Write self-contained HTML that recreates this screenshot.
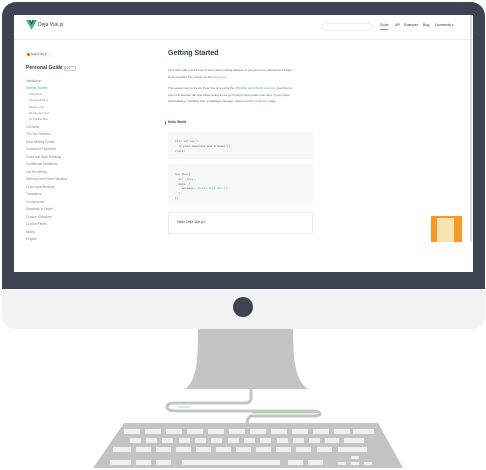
<!DOCTYPE html>
<html><head><meta charset="utf-8"><style>
*{margin:0;padding:0;box-sizing:border-box}
body{width:486px;height:470px;background:#fff;position:relative;overflow:hidden;font-family:"Liberation Sans",sans-serif;color:#34495e}
.abs{position:absolute}
.frame{left:2px;top:2px;width:483px;height:288px;background:#3d4352;border-radius:14px 14px 0 0}
.bez{left:2px;top:289px;width:483px;height:40px;background:#f3f3f3;border-radius:0 0 12px 12px}
.screen{left:14px;top:15px;width:459px;height:257px;background:#fff}
.t{position:absolute;white-space:nowrap;line-height:1}
.sb{font-size:3.2px;color:#7f8c8d}
.p{font-size:3px;color:#666}
.code{background:#f8f8f8;position:absolute}
.m{font-family:"Liberation Mono",monospace;font-size:2.8px;position:absolute;white-space:nowrap}
.key{position:absolute;background:#f0f0f0;height:5px}
</style></head><body>
<div class="abs frame"></div>
<div class="abs bez"></div>
<div class="abs" style="left:233px;top:297px;width:20px;height:20px;border-radius:50%;background:#3d4352"></div>
<div class="abs screen">
  <div class="abs" style="left:0;top:24px;width:459px;height:1px;background:#eee"></div>
  <div class="abs" style="left:456px;top:0;width:2px;height:227px;background:#ddd"></div>
  <svg class="abs" style="left:12px;top:5px" width="11" height="10" viewBox="0 0 11 10"><path d="M0 0H4L5.5 3L7 0H11L5.5 10Z" fill="#42b983"/><path d="M3 0H4.6L5.5 2L6.4 0H8L5.5 5Z" fill="#35495e"/></svg>
  <div class="t" style="left:24px;top:8px;font-size:5px;color:#2c3e50">Deja Vue.js</div>
  <div class="abs" style="left:307px;top:8px;width:52px;height:8px;border:1px solid #eee;border-radius:5px"></div>
  <div class="t" style="left:366px;top:9px;font-size:3.2px;color:#2c3e50">Guide</div>
  <div class="abs" style="left:366px;top:14px;width:8px;height:1px;background:#42b983"></div>
  <div class="t" style="left:381px;top:9px;font-size:3.2px;color:#2c3e50">API</div>
  <div class="t" style="left:390px;top:9px;font-size:3.2px;color:#2c3e50">Examples</div>
  <div class="t" style="left:409px;top:9px;font-size:3.2px;color:#2c3e50">Blog</div>
  <div class="t" style="left:421px;top:9px;font-size:3.2px;color:#2c3e50">Community ▾</div>
  <div class="abs" style="left:12px;top:37px;width:26px;height:5px;background:#f4f4f4;border-radius:1px"></div>
  <div class="abs" style="left:13px;top:38px;width:3px;height:3px;border-radius:50%;background:#e96900"></div>
  <div class="t" style="left:17px;top:38.5px;font-size:2.4px;color:#555">Support Vue.js</div>
  <div class="t" style="left:12px;top:51px;font-size:5px;font-weight:bold;color:#2c3e50">Personal Guide</div>
  <div class="abs" style="left:50px;top:51px;width:12px;height:5px;border:1px solid #ccc;font-size:2.5px;line-height:3px">2.x ▾</div>
  <div class="t sb" style="left:12px;top:65px">Installation</div>
  <div class="t sb" style="left:12px;top:72px;color:#42b983">Getting Started</div>
  <div class="t" style="left:15px;top:79px;font-size:2.5px;color:#42b983">Hello World</div>
  <div class="t" style="left:15px;top:85px;font-size:2.5px;color:#888">Two-way Binding</div>
  <div class="t" style="left:15px;top:92px;font-size:2.5px;color:#888">Render a List</div>
  <div class="t" style="left:15px;top:98px;font-size:2.5px;color:#888">Handle User Input</div>
  <div class="t" style="left:15px;top:104px;font-size:2.5px;color:#888">All Together Now</div>
  <div class="t sb" style="left:12px;top:111px">Overview</div>
  <div class="t sb" style="left:12px;top:118px">The Vue Instance</div>
  <div class="t sb" style="left:12px;top:126px">Data Binding Syntax</div>
  <div class="t sb" style="left:12px;top:133px">Computed Properties</div>
  <div class="t sb" style="left:12px;top:141px">Class and Style Bindings</div>
  <div class="t sb" style="left:12px;top:148px">Conditional Rendering</div>
  <div class="t sb" style="left:12px;top:156px">List Rendering</div>
  <div class="t sb" style="left:12px;top:163px">Methods and Event Handling</div>
  <div class="t sb" style="left:12px;top:171px">Form Input Bindings</div>
  <div class="t sb" style="left:12px;top:178px">Transitions</div>
  <div class="t sb" style="left:12px;top:186px">Components</div>
  <div class="t sb" style="left:12px;top:193px">Reactivity in Depth</div>
  <div class="t sb" style="left:12px;top:201px">Custom Directives</div>
  <div class="t sb" style="left:12px;top:208px">Custom Filters</div>
  <div class="t sb" style="left:12px;top:216px">Mixins</div>
  <div class="t sb" style="left:12px;top:223px">Plugins</div>
  <div class="t" style="left:154px;top:35px;font-size:7px;font-weight:bold;color:#2c3e50">Getting Started</div>
  <div class="t p" style="left:154px;top:54px">Let's start with a quick tour of Vue's data binding features. If you are more interested in a high-</div>
  <div class="t p" style="left:154px;top:61px">level overview first, check out this <span style="color:#42b983">blog post</span>.</div>
  <div class="t p" style="left:154px;top:72px">The easiest way to try out Deja Vue.js is using the <span style="color:#42b983">JSFiddle Hello World example</span>. Feel free to</div>
  <div class="t p" style="left:154px;top:79px">open it in another tab and follow along as we go through some basic examples. If you prefer</div>
  <div class="t p" style="left:154px;top:85px">downloading / installing from a package manager, check out the <span style="color:#42b983">Installation</span> page.</div>
  <div class="abs" style="left:151px;top:106px;width:1px;height:4px;background:#42b983"></div>
  <div class="t" style="left:154px;top:106px;font-size:3.3px;font-weight:bold;color:#2c3e50">Hello World</div>
  <div class="code" style="left:154px;top:117px;width:145px;height:27px"></div>
  <div class="m" style="left:161px;top:125px;color:#2973b7">&lt;div id=<span style="color:#42b983">"app"</span>&gt;</div>
  <div class="m" style="left:161px;top:130px;color:#555">&nbsp;&nbsp;{{ past memories and traumas }}</div>
  <div class="m" style="left:161px;top:135px;color:#2973b7">&lt;/div&gt;</div>
  <div class="code" style="left:154px;top:149px;width:145px;height:42px"></div>
  <div class="m" style="left:161px;top:158px;color:#555"><span style="color:#e96900">new</span> Vue({</div>
  <div class="m" style="left:161px;top:163px;color:#555">&nbsp;&nbsp;el: <span style="color:#42b983">'#app'</span>,</div>
  <div class="m" style="left:161px;top:168px;color:#555">&nbsp;&nbsp;data: {</div>
  <div class="m" style="left:161px;top:172px;color:#555">&nbsp;&nbsp;&nbsp;&nbsp;message: <span style="color:#42b983">'Hello Deja Vue.js!'</span></div>
  <div class="m" style="left:161px;top:177px;color:#555">&nbsp;&nbsp;}</div>
  <div class="m" style="left:161px;top:182px;color:#555">})</div>
  <div class="abs" style="left:154px;top:197px;width:145px;height:22px;border:1px solid #eee"></div>
  <div class="t" style="left:163px;top:206px;font-size:3.5px;color:#2c3e50">Hello Deja Vue.js!</div>
  <div class="abs" style="left:417px;top:201px;width:31px;height:26px;background:#f59a2a"></div>
  <div class="abs" style="left:423px;top:203px;width:17px;height:24px;background:#f7e2b0"></div>
</div>
<svg class="abs" style="left:0;top:328px" width="486" height="142" viewBox="0 328 486 142">
  <path d="M198 329H293C293 360 295 380 308 389H185C197 380 198 360 198 329Z" fill="#c4c4c4"/>
  <path d="M251 389V398Q251 403 245 403H175Q167 403 167 407Q167 411 178 411H310Q320 411 320 414Q320 416 312 416H252Q248 416 247 423" fill="none" stroke="#c4c4c4" stroke-width="3"/>
  <path d="M178 407H190M252 413H315" stroke="#9be39b" stroke-width="1"/>
  <path d="M124 423H378L403 468H93Z" fill="#c4c4c4"/>
</svg>
<div class="key" style="left:124px;top:429px;width:16px"></div><div class="key" style="left:145px;top:429px;width:16px"></div><div class="key" style="left:166px;top:429px;width:16px"></div><div class="key" style="left:187px;top:429px;width:16px"></div><div class="key" style="left:208px;top:429px;width:16px"></div><div class="key" style="left:229px;top:429px;width:16px"></div><div class="key" style="left:250px;top:429px;width:16px"></div><div class="key" style="left:271px;top:429px;width:16px"></div><div class="key" style="left:292px;top:429px;width:16px"></div><div class="key" style="left:313px;top:429px;width:16px"></div><div class="key" style="left:334px;top:429px;width:16px"></div><div class="key" style="left:353px;top:429px;width:21px"></div>
<div class="key" style="left:130px;top:438px;width:11px"></div><div class="key" style="left:146px;top:438px;width:11px"></div><div class="key" style="left:162px;top:438px;width:11px"></div><div class="key" style="left:179px;top:438px;width:11px"></div><div class="key" style="left:195px;top:438px;width:11px"></div><div class="key" style="left:211px;top:438px;width:11px"></div><div class="key" style="left:228px;top:438px;width:11px"></div><div class="key" style="left:244px;top:438px;width:11px"></div><div class="key" style="left:260px;top:438px;width:11px"></div><div class="key" style="left:277px;top:438px;width:11px"></div><div class="key" style="left:293px;top:438px;width:11px"></div><div class="key" style="left:309px;top:438px;width:11px"></div><div class="key" style="left:325px;top:438px;width:14px"></div><div class="key" style="left:344px;top:438px;width:20px"></div>
<div class="key" style="left:113px;top:447px;width:18px"></div><div class="key" style="left:136px;top:447px;width:15px"></div><div class="key" style="left:156px;top:447px;width:15px"></div><div class="key" style="left:176px;top:447px;width:15px"></div><div class="key" style="left:196px;top:447px;width:15px"></div><div class="key" style="left:216px;top:447px;width:15px"></div><div class="key" style="left:236px;top:447px;width:15px"></div><div class="key" style="left:256px;top:447px;width:15px"></div><div class="key" style="left:276px;top:447px;width:15px"></div><div class="key" style="left:296px;top:447px;width:15px"></div><div class="key" style="left:317px;top:447px;width:15px"></div><div class="key" style="left:338px;top:447px;width:29px"></div>
<div class="key" style="left:110px;top:460px;width:21px"></div><div class="key" style="left:136px;top:460px;width:15px"></div><div class="key" style="left:156px;top:460px;width:15px"></div><div class="key" style="left:182px;top:460px;width:98px"></div><div class="key" style="left:288px;top:460px;width:15px"></div><div class="key" style="left:308px;top:460px;width:15px"></div><div class="key" style="left:338px;top:462px;width:8px;height:3px"></div><div class="key" style="left:351px;top:456px;width:8px;height:3px"></div><div class="key" style="left:351px;top:462px;width:8px;height:3px"></div><div class="key" style="left:364px;top:462px;width:8px;height:3px"></div>
</body></html>
